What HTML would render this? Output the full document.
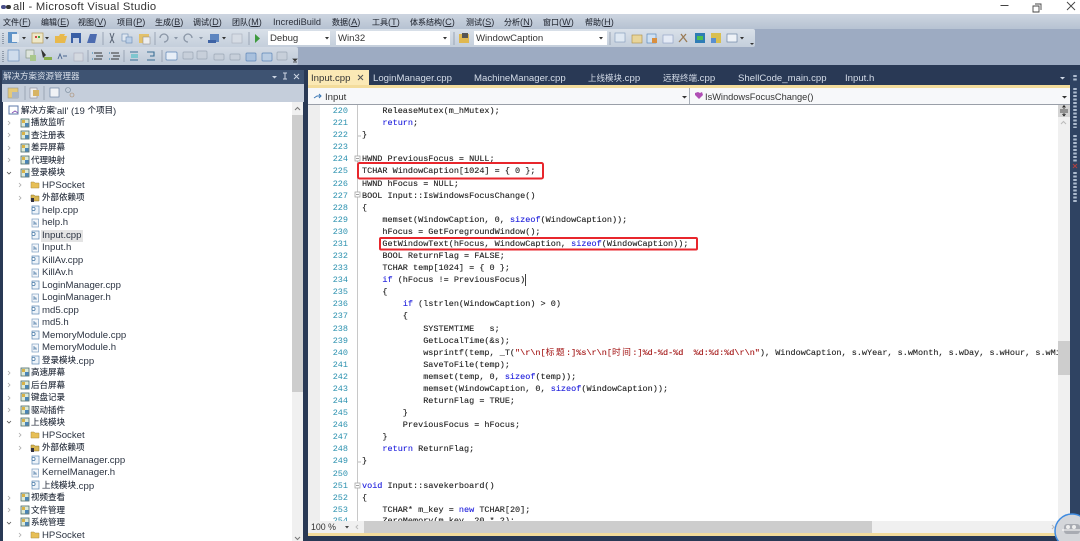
<!DOCTYPE html>
<html><head><meta charset="utf-8"><title>all - Microsoft Visual Studio</title>
<style>
html,body{margin:0;padding:0;background:#293955}
body{width:1080px;height:541px;overflow:hidden;position:relative;font-family:"Liberation Sans","Noto Sans CJK SC",sans-serif}
#w{position:absolute;left:0;top:0;width:1080px;height:541px;overflow:hidden;filter:blur(.35px)}
.a,.m span,.t div,.c div,.n div,.tab{position:absolute;white-space:pre}
.a{display:block}
i{font-style:normal}
.m span{top:16px;font-size:9.2px;line-height:13px;color:#2a2f3a}
.m i{font-size:8px;-webkit-text-stroke:.1px #2a2f3a}
.t div{font-size:9.6px;line-height:12px;color:#2c3442;height:12px;margin-top:1px}
.t i{font-size:8.5px;position:relative;top:-1.2px;color:#222a38;-webkit-text-stroke:.1px #222a38}
.c div{left:362px;font:8.5px/12px "Liberation Mono","Noto Sans CJK SC",monospace;color:#222;height:12px;margin-top:1px;-webkit-text-stroke:.12px #222}
.c i{font-size:8.8px;letter-spacing:1.4px;-webkit-text-stroke:0}
.n div{left:320px;width:28px;text-align:right;font:8.5px/12px "Liberation Mono",monospace;color:#2b91af;height:12px;margin-top:1px}
.k{color:#2222dd;-webkit-text-stroke:.12px #2222dd}.s{color:#a31515;-webkit-text-stroke:.12px #a31515}
.tab{top:72px;font-size:9.6px;line-height:13px;color:#d4dce8}
.tab i{font-size:8.5px;position:relative;top:-.5px}
svg{position:absolute;left:0;top:0}
</style></head><body><div id="w">
<div class="a" style="left:0;top:0;width:1080px;height:14px;background:#fff"></div>
<div class="a" style="left:13px;top:1px;font-size:11.2px;line-height:13px;color:#333;letter-spacing:.3px">all - Microsoft Visual Studio</div>
<div class="a" style="left:0;top:14px;width:1080px;height:15px;background:linear-gradient(#cdd5e0,#b6c2d2)"></div>
<div class="a" style="left:0;top:29px;width:1080px;height:36px;background:#9dabc2"></div>
<div class="a" style="left:0;top:29px;width:755px;height:18px;background:linear-gradient(#d9e0e9,#c4cedb);border-radius:0 2px 2px 0"></div>
<div class="a" style="left:0;top:47px;width:298px;height:18px;background:linear-gradient(#d3dae4,#bdc8d7);border-radius:0 2px 2px 0"></div>
<div class="a" style="left:0;top:65px;width:1080px;height:476px;background:#293955"></div>

<div class="m">
<span style="left:3px"><i>文件</i>(<u>F</u>)</span><span style="left:41px"><i>编辑</i>(<u>E</u>)</span><span style="left:78px"><i>视图</i>(<u>V</u>)</span><span style="left:117px"><i>项目</i>(<u>P</u>)</span><span style="left:155px"><i>生成</i>(<u>B</u>)</span><span style="left:193px"><i>调试</i>(<u>D</u>)</span><span style="left:232px"><i>团队</i>(<u>M</u>)</span><span style="left:273px">IncrediBuild</span><span style="left:332px"><i>数据</i>(<u>A</u>)</span><span style="left:372px"><i>工具</i>(<u>T</u>)</span><span style="left:410px"><i>体系结构</i>(<u>C</u>)</span><span style="left:466px"><i>测试</i>(<u>S</u>)</span><span style="left:504px"><i>分析</i>(<u>N</u>)</span><span style="left:543px"><i>窗口</i>(<u>W</u>)</span><span style="left:585px"><i>帮助</i>(<u>H</u>)</span>
</div>

<!-- combos -->
<div class="a" style="left:268px;top:31px;width:62px;height:14px;background:#fff;font-size:9.6px;line-height:16px;color:#333;text-indent:2px">Debug</div>
<div class="a" style="left:336px;top:31px;width:114px;height:14px;background:#fff;font-size:9.6px;line-height:16px;color:#333;text-indent:2px">Win32</div>
<div class="a" style="left:474px;top:31px;width:133px;height:14px;background:#fff;font-size:9.6px;line-height:16px;color:#333;text-indent:2px">WindowCaption</div>

<!-- left panel -->
<div class="a" style="left:2px;top:70px;width:302px;height:14px;background:#3e5372"></div>
<div class="a" style="left:3px;top:70px;font-size:8.5px;line-height:13px;color:#d9e0ea">解决方案资源管理器</div>
<div class="a" style="left:2px;top:84px;width:302px;height:18px;background:#c5cedb"></div>
<div class="a" style="left:3px;top:102px;width:300px;height:439px;background:#fff"></div>
<div class="a" style="left:292px;top:102px;width:11px;height:439px;background:#f0f0f0"></div>
<div class="a" style="left:292px;top:115px;width:11px;height:277px;background:#cdcdcd"></div>

<div class="t">
<div style="left:21px;top:104px"><i>解决方案</i>'all' (19 <i>个项目</i>)</div>
<div style="left:31px;top:116px"><i>播放监听</i></div>
<div style="left:31px;top:129px"><i>查注册表</i></div>
<div style="left:31px;top:141px"><i>差异屏幕</i></div>
<div style="left:31px;top:154px"><i>代理映射</i></div>
<div style="left:31px;top:166px"><i>登录模块</i></div>
<div style="left:42px;top:179px">HPSocket</div>
<div style="left:42px;top:191px"><i>外部依赖项</i></div>
<div style="left:42px;top:204px">help.cpp</div>
<div style="left:42px;top:216px">help.h</div>
<div style="left:41px;top:229px;background:#e4e4e4;padding:0 2px 0 1px">Input.cpp</div>
<div style="left:42px;top:241px">Input.h</div>
<div style="left:42px;top:254px">KillAv.cpp</div>
<div style="left:42px;top:266px">KillAv.h</div>
<div style="left:42px;top:279px">LoginManager.cpp</div>
<div style="left:42px;top:291px">LoginManager.h</div>
<div style="left:42px;top:304px">md5.cpp</div>
<div style="left:42px;top:316px">md5.h</div>
<div style="left:42px;top:329px">MemoryModule.cpp</div>
<div style="left:42px;top:341px">MemoryModule.h</div>
<div style="left:42px;top:354px"><i>登录模块</i>.cpp</div>
<div style="left:31px;top:366px"><i>高速屏幕</i></div>
<div style="left:31px;top:379px"><i>后台屏幕</i></div>
<div style="left:31px;top:391px"><i>键盘记录</i></div>
<div style="left:31px;top:404px"><i>驱动插件</i></div>
<div style="left:31px;top:416px"><i>上线模块</i></div>
<div style="left:42px;top:429px">HPSocket</div>
<div style="left:42px;top:441px"><i>外部依赖项</i></div>
<div style="left:42px;top:454px">KernelManager.cpp</div>
<div style="left:42px;top:466px">KernelManager.h</div>
<div style="left:42px;top:479px"><i>上线模块</i>.cpp</div>
<div style="left:31px;top:491px"><i>视频查看</i></div>
<div style="left:31px;top:504px"><i>文件管理</i></div>
<div style="left:31px;top:516px"><i>系统管理</i></div>
<div style="left:42px;top:529px">HPSocket</div>
</div>

<!-- tabs -->
<div class="a" style="left:308px;top:70px;width:61px;height:16px;background:#fbe9b5"></div>
<div class="tab" style="left:311px;color:#333">Input.cpp</div>
<div class="tab" style="left:373px">LoginManager.cpp</div>
<div class="tab" style="left:474px">MachineManager.cpp</div>
<div class="tab" style="left:588px"><i>上线模块</i>.cpp</div>
<div class="tab" style="left:663px"><i>远程终端</i>.cpp</div>
<div class="tab" style="left:738px">ShellCode_main.cpp</div>
<div class="tab" style="left:845px">Input.h</div>

<!-- editor chrome -->
<div class="a" style="left:308px;top:85px;width:762px;height:3px;background:#f3dc9c"></div>
<div class="a" style="left:308px;top:88px;width:762px;height:16px;background:#f7f8fa;border-bottom:1px solid #9a9fa8;box-sizing:content-box"></div>
<div class="a" style="left:689px;top:88px;width:1px;height:16px;background:#a9afb8"></div>
<div class="a" style="left:325px;top:91px;font-size:9.6px;line-height:13px;color:#333">Input</div>
<div class="a" style="left:705px;top:91px;font-size:9.25px;line-height:13px;color:#333">IsWindowsFocusChange()</div>
<div class="a" style="left:308px;top:105px;width:762px;height:428px;background:#fff"></div>
<div class="a" style="left:308px;top:105px;width:12px;height:416px;background:#eeeeee"></div>
<div class="a" style="left:357px;top:105px;width:1px;height:416px;background:#c8c8c8"></div>
<div class="a" style="left:1058px;top:105px;width:12px;height:428px;background:#f0f0f0"></div>
<div class="a" style="left:1058px;top:105px;width:12px;height:12px;background:#d4d4d4"></div>
<div class="a" style="left:1058px;top:341px;width:12px;height:34px;background:#cdcdcd"></div>

<div class="n">
<div style="top:104px">220</div><div style="top:116px">221</div><div style="top:128px">222</div><div style="top:140px">223</div><div style="top:152px">224</div><div style="top:164px">225</div><div style="top:177px">226</div><div style="top:189px">227</div><div style="top:201px">228</div><div style="top:213px">229</div><div style="top:225px">230</div><div style="top:237px">231</div><div style="top:249px">232</div><div style="top:261px">233</div><div style="top:273px">234</div><div style="top:285px">235</div><div style="top:297px">236</div><div style="top:309px">237</div><div style="top:322px">238</div><div style="top:334px">239</div><div style="top:346px">240</div><div style="top:358px">241</div><div style="top:370px">242</div><div style="top:382px">243</div><div style="top:394px">244</div><div style="top:406px">245</div><div style="top:418px">246</div><div style="top:430px">247</div><div style="top:442px">248</div><div style="top:454px">249</div><div style="top:467px">250</div><div style="top:479px">251</div><div style="top:491px">252</div><div style="top:503px">253</div><div style="top:514px;height:7px;overflow:hidden">254</div>
</div>

<div class="c">
<div style="top:104px">    ReleaseMutex(m_hMutex);</div>
<div style="top:116px">    <span class="k">return</span>;</div>
<div style="top:128px">}</div>
<div style="top:152px">HWND PreviousFocus = NULL;</div>
<div style="top:164px">TCHAR WindowCaption[1024] = { 0 };</div>
<div style="top:177px">HWND hFocus = NULL;</div>
<div style="top:189px">BOOL Input::IsWindowsFocusChange()</div>
<div style="top:201px">{</div>
<div style="top:213px">    memset(WindowCaption, 0, <span class="k">sizeof</span>(WindowCaption));</div>
<div style="top:225px">    hFocus = GetForegroundWindow();</div>
<div style="top:237px">    GetWindowText(hFocus, WindowCaption, <span class="k">sizeof</span>(WindowCaption));</div>
<div style="top:249px">    BOOL ReturnFlag = FALSE;</div>
<div style="top:261px">    TCHAR temp[1024] = { 0 };</div>
<div style="top:273px">    <span class="k">if</span> (hFocus != PreviousFocus)</div>
<div style="top:285px">    {</div>
<div style="top:297px">        <span class="k">if</span> (lstrlen(WindowCaption) &gt; 0)</div>
<div style="top:309px">        {</div>
<div style="top:322px">            SYSTEMTIME   s;</div>
<div style="top:334px">            GetLocalTime(&amp;s);</div>
<div style="top:346px;width:696px;overflow:hidden">            wsprintf(temp, _T(<span class="s">"\r\n[<i>标题</i>:]%s\r\n[<i>时间</i>:]%d-%d-%d  %d:%d:%d\r\n"</span>), WindowCaption, s.wYear, s.wMonth, s.wDay, s.wHour, s.wMinute);</div>
<div style="top:358px">            SaveToFile(temp);</div>
<div style="top:370px">            memset(temp, 0, <span class="k">sizeof</span>(temp));</div>
<div style="top:382px">            memset(WindowCaption, 0, <span class="k">sizeof</span>(WindowCaption));</div>
<div style="top:394px">            ReturnFlag = TRUE;</div>
<div style="top:406px">        }</div>
<div style="top:418px">        PreviousFocus = hFocus;</div>
<div style="top:430px">    }</div>
<div style="top:442px">    <span class="k">return</span> ReturnFlag;</div>
<div style="top:454px">}</div>
<div style="top:479px"><span class="k">void</span> Input::savekerboard()</div>
<div style="top:491px">{</div>
<div style="top:503px">    TCHAR* m_key = <span class="k">new</span> TCHAR[20];</div>
<div style="top:514px;height:7px;overflow:hidden">    ZeroMemory(m_key, 20 * 2);</div>
</div>

<!-- bottom bar -->
<div class="a" style="left:308px;top:521px;width:750px;height:12px;background:#f0f0f0"></div>
<div class="a" style="left:364px;top:521px;width:508px;height:12px;background:#cdcdcd"></div>
<div class="a" style="left:311px;top:521px;font-size:8.8px;line-height:12px;color:#333">100 %</div>
<div class="a" style="left:308px;top:533px;width:762px;height:3px;background:#f3dc9c"></div>
<div class="a" style="left:1070px;top:70px;width:10px;height:471px;background:#2f4362"></div>

<svg width="1080" height="541" viewBox="0 0 1080 541" fill="none">
<!-- window controls -->
<path d="M1000.500 5.500h8M1035 4h6v6M1033 6h6v6h-6zM1067 2l8 8M1075 2l-8 8" stroke="#444" stroke-width=".9"/>
<rect x="1" y="5" width="5" height="4" rx="2" fill="#4a4f8a"/><rect x="6" y="5" width="5" height="4" rx="2" fill="#333"/>
<!-- toolbar 1 -->
<path d="M3 33v11M3 51v11" stroke="#7d8898" stroke-width="1.500" stroke-dasharray="1 1"/>
<rect x="8" y="32" width="9" height="11" fill="#5f93c8"/><rect x="12" y="34" width="7" height="8" fill="#e9eef3"/>
<rect x="32" y="33" width="11" height="10" fill="#eee8c8" stroke="#b79a55" stroke-width=".7"/><rect x="35" y="36" width="2" height="2" fill="#c44"/><rect x="38" y="36" width="2" height="2" fill="#4a4"/>
<path d="M55 43v-7h4l1-2h5l-1 2h3l-2 7z" fill="#e8b94c"/><rect x="71" y="33" width="10" height="10" fill="#3a5fa5"/><rect x="73" y="38" width="6" height="5" fill="#c8d3e6"/>
<path d="M87 43l3-9h7l-2 9z" fill="#4d6cb0"/><path d="M110 33l2 6 2-6M112 39l-2 4M112 39l2 4" stroke="#5a6575"/>
<rect x="122" y="34" width="6" height="7" fill="#dfe7f0" stroke="#6a8bb3" stroke-width=".6"/><rect x="126" y="37" width="6" height="6" fill="#bcd0e8" stroke="#6a8bb3" stroke-width=".6"/>
<rect x="139" y="34" width="10" height="9" fill="#e2c16b"/><rect x="143" y="37" width="7" height="7" fill="#eee" stroke="#888" stroke-width=".5"/>
<path d="M103 32v13M155 32v13" stroke="#9aa5b5"/><path d="M160 38a4 4 0 1 1 4 4M192 38a4 4 0 1 0-4 4" stroke="#8a96a6" stroke-width="1.300"/>
<rect x="210" y="34" width="9" height="8" fill="#5e86c0"/><rect x="208" y="40" width="8" height="3" fill="#3e63a5"/><rect x="232" y="34" width="10" height="9" fill="#d6dce4" stroke="#a8b0bb" stroke-width=".6"/>
<path d="M255 34l5 4.500-5 4.500z" fill="#3e9a3e"/><path d="M249 32v13M454 32v13M610 32v13" stroke="#9aa5b5"/>
<path d="M325 37h4l-2 2.500zM443 37h4l-2 2.500zM599 37h4l-2 2.500zM22 37h4l-2 2.500zM45 37h4l-2 2.500z" fill="#333"/>
<path d="M174 37h4l-2 2.500zM199 37h4l-2 2.500z" fill="#8a96a6"/><path d="M222 37h4l-2 2.500z" fill="#333"/>
<rect x="459" y="34" width="10" height="9" fill="#e0b850"/><rect x="462" y="33" width="6" height="5" fill="#555"/>
<g stroke-width=".6"><rect x="615" y="33" width="10" height="9" fill="#dfe8f2" stroke="#7f97b8"/><rect x="632" y="35" width="10" height="8" fill="#e8d59a" stroke="#aa8d44"/><rect x="647" y="34" width="9" height="9" fill="#cfe0f2" stroke="#4f7fb3"/><rect x="652" y="38" width="5" height="5" fill="#d98f3f"/><rect x="663" y="35" width="10" height="8" fill="#e4eaf5" stroke="#8a9cc0"/><path d="M679 42l7-8M681 34l6 8" stroke="#9a7b55" stroke-width="1.300"/><rect x="695" y="33" width="10" height="10" fill="#2f7db5"/><rect x="697" y="36" width="6" height="4" fill="#4fc04f"/><rect x="711" y="33" width="10" height="10" fill="#d9bf4f"/><rect x="711" y="38" width="5" height="5" fill="#5a8fd0"/><rect x="727" y="34" width="10" height="8" fill="#eef2f7" stroke="#5d7799"/></g>
<path d="M740 37h4l-2 2.500zM750 43h4l-2 2z" fill="#333"/>
<!-- toolbar 2 -->
<g stroke-width=".6"><rect x="8" y="50" width="11" height="11" fill="#cfdcec" stroke="#5e86b8"/><rect x="26" y="50" width="8" height="8" fill="#dde4dc" stroke="#7a8a78"/><rect x="30" y="55" width="6" height="6" fill="#a9c78b"/><path d="M41 49l2 9 3-3z" fill="#333"/><rect x="44" y="57" width="8" height="3" fill="#8ab04e"/><path d="M58 59l2-5 2 5M63 56h4" stroke="#49658f" stroke-width=".9"/><rect x="74" y="53" width="9" height="8" fill="#d4d9e0" stroke="#aab"/></g>
<path d="M88 50v12M124 50v12M162 50v12" stroke="#9aa5b5"/>
<path d="M94 53h8M96 56h7M94 59h8M111 53h8M113 56h7M111 59h8" stroke="#333" stroke-width="1.100"/><path d="M92 53h1M92 59h1M109 53h1M109 59h1" stroke="#2a7db0"/>
<path d="M130 52h8M130 60h8" stroke="#3a6f95" stroke-width="1.100"/><rect x="131" y="54" width="7" height="4" fill="#7fc6cf"/><path d="M147 52h7v4h-4M147 60h8" stroke="#3a6f95" stroke-width="1.100"/>
<g fill="#c7cfda" stroke="#9ca7b6" stroke-width=".7"><rect x="166" y="52" width="11" height="8" rx="1" fill="#e7eef7" stroke="#5e86b8"/><rect x="183" y="52" width="10" height="7" rx="1"/><rect x="197" y="51" width="10" height="8" rx="1"/><rect x="214" y="54" width="10" height="6" rx="1"/><rect x="230" y="54" width="10" height="6" rx="1"/><rect x="246" y="53" width="10" height="8" rx="1" fill="#a8c0dd" stroke="#5e86b8"/><rect x="262" y="53" width="10" height="8" rx="1" fill="#b9cce2" stroke="#5e86b8"/><rect x="277" y="52" width="10" height="8" rx="1"/></g>
<path d="M293 59h4l-2 2zM293 62h4" stroke="#333" stroke-width=".7" fill="#333"/>
<!-- panel -->
<path d="M272 76h5l-2.500 2.500zM1060 77h5l-2.500 2.500z" fill="#cdd6e3"/><path d="M285 73v6M283 79h4M283 73h4" stroke="#cdd6e3"/><path d="M294 74l5 5M299 74l-5 5" stroke="#cdd6e3"/>
<g stroke-width=".6"><rect x="8" y="88" width="10" height="10" fill="#e4c97a" stroke="#998"/><rect x="12" y="92" width="7" height="6" fill="#aab6c7"/><rect x="30" y="88" width="7" height="10" fill="#eee" stroke="#889"/><rect x="33" y="90" width="6" height="6" fill="#d7b465"/><rect x="50" y="88" width="9" height="9" fill="#f0f2f5" stroke="#5d7799"/><circle cx="68" cy="90" r="2.500" stroke="#789"/><circle cx="72" cy="95" r="2" stroke="#a86"/></g>
<path d="M25 86v14M44 86v14" stroke="#9aa5b5"/>
<path d="M295 110l2.500-2.500 2.500 2.500M295 537l2.500 2.500 2.500-2.500" stroke="#777"/>
<!-- chevrons -->
<g stroke="#aaa" stroke-width=".8"><path d="M8 121l2 2-2 2M8 133l2 2-2 2M8 146l2 2-2 2M8 158l2 2-2 2M19 183l2 2-2 2M19 196l2 2-2 2M8 371l2 2-2 2M8 383l2 2-2 2M8 396l2 2-2 2M8 408l2 2-2 2M19 433l2 2-2 2M19 446l2 2-2 2M8 496l2 2-2 2M8 508l2 2-2 2M19 533l2 2-2 2"/><path d="M7 172l2 2 2-2M7 421l2 2 2-2M7 522l2 2 2-2" stroke="#555"/></g>
<!-- solution icon -->
<rect x="9" y="106" width="9" height="8" fill="#fff" stroke="#5d78a8"/><path d="M12 113l3-2 3 2" stroke="#8a58b5"/>
<!-- project icons -->
<defs><g id="pj"><rect width="8" height="8" fill="#dcead8" stroke="#4a6a6a" stroke-width=".8"/><rect x="1" y="1" width="3" height="3" fill="#d8b247"/><rect x="4" y="4" width="3.500" height="3.500" fill="#4b86b8"/></g>
<g id="fo"><path d="M0 7V1h3l1 1h4v5z" fill="#e7bf57" stroke="#a98a40" stroke-width=".5"/></g>
<g id="dp"><path d="M0 7V1h3l1 1h4v5z" fill="#d9b651" stroke="#8a7430" stroke-width=".5"/><rect y="4" width="3" height="4" fill="#334"/></g>
<g id="cp"><rect x="1" y="0" width="7" height="8" fill="#edf3f9" stroke="#5b87b3" stroke-width=".7"/><circle cx="2.500" cy="3" r="1.600" fill="#fff" stroke="#4a7ba8" stroke-width=".8"/></g>
<g id="hh"><rect x="1" y="0" width="6.500" height="8" fill="#f3f6fa" stroke="#7d9fc0" stroke-width=".7"/><path d="M3 2v4M3 4h2v2" stroke="#3c6f9e" stroke-width=".7"/></g></defs>
<use href="#pj" x="21" y="119"/><use href="#pj" x="21" y="131"/><use href="#pj" x="21" y="144"/><use href="#pj" x="21" y="156"/><use href="#pj" x="21" y="169"/><use href="#pj" x="21" y="368"/><use href="#pj" x="21" y="381"/><use href="#pj" x="21" y="393"/><use href="#pj" x="21" y="406"/><use href="#pj" x="21" y="418"/><use href="#pj" x="21" y="493"/><use href="#pj" x="21" y="506"/><use href="#pj" x="21" y="518"/>
<use href="#fo" x="31" y="181"/><use href="#fo" x="31" y="431"/><use href="#fo" x="31" y="531"/><use href="#dp" x="31" y="194"/><use href="#dp" x="31" y="444"/>
<use href="#cp" x="31" y="206"/><use href="#cp" x="31" y="231"/><use href="#cp" x="31" y="256"/><use href="#cp" x="31" y="281"/><use href="#cp" x="31" y="306"/><use href="#cp" x="31" y="331"/><use href="#cp" x="31" y="356"/><use href="#cp" x="31" y="456"/><use href="#cp" x="31" y="481"/>
<use href="#hh" x="31" y="219"/><use href="#hh" x="31" y="244"/><use href="#hh" x="31" y="269"/><use href="#hh" x="31" y="294"/><use href="#hh" x="31" y="319"/><use href="#hh" x="31" y="344"/><use href="#hh" x="31" y="469"/>
<!-- tab + nav -->
<path d="M358 75l5 5M363 75l-5 5" stroke="#555"/>
<path d="M314 98l3-2h4M319 94l2 2-2 2" stroke="#3c78b5" stroke-width="1"/>
<path d="M682 96h5l-2.500 2.500zM1062 96h5l-2.500 2.500z" fill="#333"/>
<path d="M695 93l3-1 2 1 2-1 1 3-4 4-4-4z" fill="#b04fb5"/>
<!-- splitter -->
<path d="M1060 110h8M1060 112h8M1064 106v3M1062.500 107.500l1.500-2 1.500 2M1064 113v3M1062.500 114l1.500 2 1.500-2" stroke="#222" stroke-width=".8"/>
<path d="M1061 124l2.500-2.500 2.500 2.500" stroke="#bbb"/>
<!-- folding -->
<g stroke="#999" stroke-width=".7" fill="#fff"><rect x="355" y="156" width="5" height="5"/><rect x="355" y="192" width="5" height="5"/><rect x="355" y="483" width="5" height="5"/></g>
<path d="M356 158.500h3M356 194.500h3M356 485.500h3" stroke="#444" stroke-width=".6"/>
<path d="M358 136h3M358 462h3" stroke="#bbb"/>
<!-- bottom arrows -->
<path d="M345 526h4l-2 2.500z" fill="#444"/><path d="M358 525l-2 2 2 2" stroke="#bbb"/><path d="M1052 525l2 2-2 2" stroke="#bbb"/>
<!-- caret -->
<path d="M525.500 274v12" stroke="#111" stroke-width=".8"/>
<!-- red boxes -->
<rect x="358" y="163" width="185" height="15.500" rx="1.500" stroke="#e8262c" stroke-width="2"/>
<rect x="380" y="238" width="317" height="11.500" rx="1" stroke="#e8262c" stroke-width="2"/>
<!-- right strip -->
<path d="M1075 75v6M1075 88v40M1075 135v28M1075 172v30" stroke="#aebccf" stroke-width="3.500" stroke-dasharray="2 1.500"/><path d="M1073 164l4 4M1077 164l-4 4" stroke="#b04040"/>
<!-- avatar -->
<circle cx="1072" cy="531" r="17" fill="#d4d6da" stroke="#3f8be0" stroke-width="1.500"/>
<rect x="1064" y="524" width="16" height="10" rx="3" fill="#a8abb2"/><circle cx="1068" cy="527" r="2" fill="#eee"/><circle cx="1074" cy="527" r="2" fill="#eee"/><path d="M1062 530h18" stroke="#fff"/>
</svg>
</div></body></html>
